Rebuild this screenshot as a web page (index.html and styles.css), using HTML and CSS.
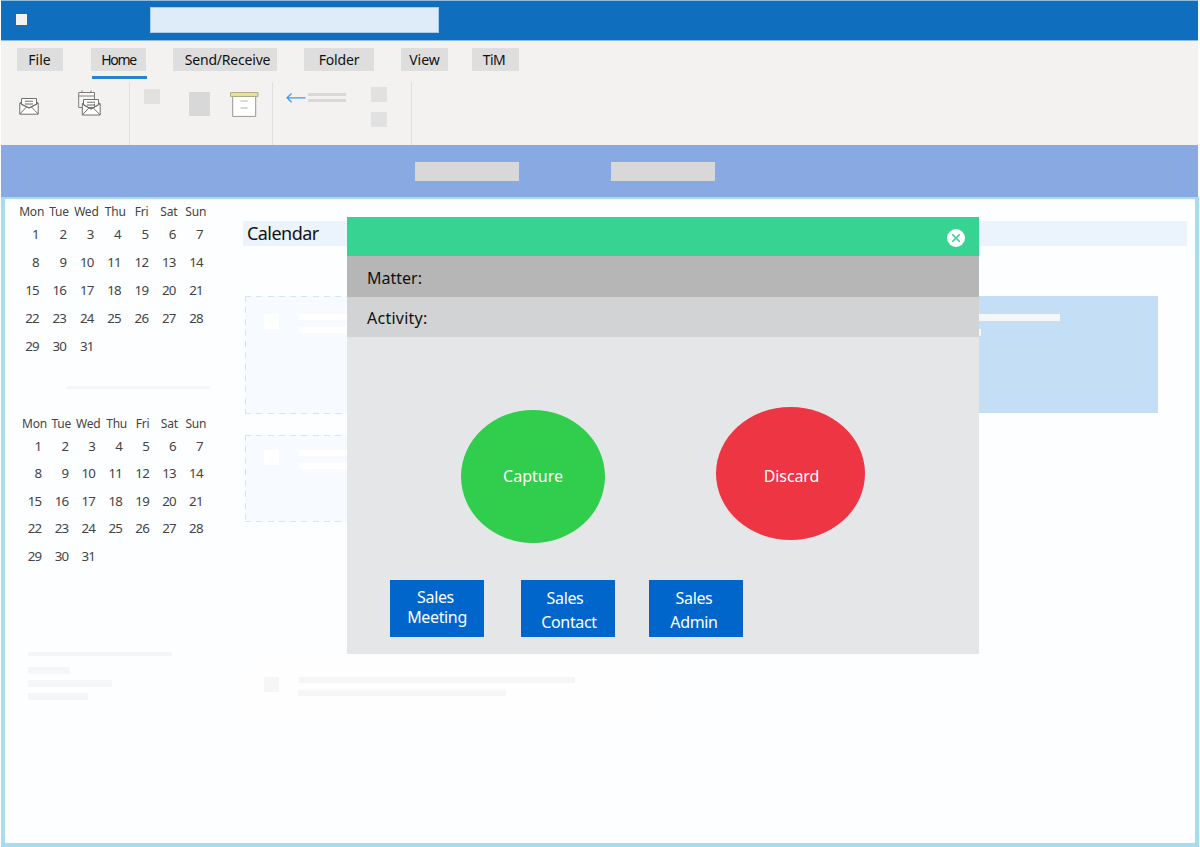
FILE: index.html
```
<!DOCTYPE html>
<html lang="en">
<head>
    <meta charset="UTF-8">
    <meta name="viewport" content="width=device-width, initial-scale=1.0">
    <title>Calendar</title>
    <link rel="stylesheet" href="styles.css">
</head>
<body>
    <div class="app">
        <header class="titlebar">
            <div class="app-icon"></div>
            <div class="search"></div>
        </header>

        <div class="ribbon">
            <nav class="tabs">
                <a class="tab tab-file">File</a>
                <a class="tab tab-home active">Home</a>
                <a class="tab tab-send">Send/Receive</a>
                <a class="tab tab-folder">Folder</a>
                <a class="tab tab-view">View</a>
                <a class="tab tab-tim">TiM</a>
            </nav>
            <div class="tools">
                <div class="group group-new">
                    <svg class="icon-mail" width="20" height="18" viewBox="0 0 20 18" fill="none" stroke="#6f6f6f">
                        <path d="M2.5 6.5V1.5H17.5V6.5" fill="#fff"/>
                        <path d="M.8 6.2L2.5 5V7.5L10 11L17.5 7.5V5L19.2 6.2V17.2H.8Z" fill="#fff"/>
                        <path d="M.8 6.2L10 11L19.2 6.2M.8 17L7.5 10M19.2 17L12.5 10M6 4.2H14M6 7H14"/>
                    </svg>
                    <svg class="icon-mail-cal" width="23" height="26" viewBox="0 0 23 26" fill="none" stroke="#6f6f6f">
                        <path d="M.7 2.5H16.5V17.5H.7ZM.7 6H16.5M4 .5V3M13 .5V3" fill="#f7f7f6" stroke-width=".9"/>
                        <path d="M5.5 13.5V9.5H20.5V13.5" fill="#fff"/>
                        <path d="M4.3 13.7L5.5 13V15L13 19L20.5 15V13L22.2 13.7V25H4.3Z" fill="#fff"/>
                        <path d="M4.3 13.7L13 19L22.2 13.7M4.3 25L10.8 18M22.2 25L15.3 18M9 12.2H17M9 15H17"/>
                    </svg>
                </div>
                <div class="group group-delete">
                    <div class="block block-small"></div>
                    <div class="block block-large"></div>
                    <svg class="icon-archive" width="29" height="26" viewBox="0 0 29 26">
                        <path d="M2.7 4.5H25.7V24.4H2.7Z" fill="#fff" stroke="#969696"/>
                        <path d="M.5 .6H28V4.4H.5Z" fill="#ece88d" stroke="#a9a989"/>
                        <path d="M10.5 9H17.8M10.5 16H17.8" stroke="#b4b4b4"/>
                    </svg>
                </div>
                <div class="group group-respond">
                    <svg class="icon-arrow" width="20" height="10" viewBox="0 0 20 10" fill="none" stroke="#3c97fa" stroke-width="1.2">
                        <path d="M19.5 4.8H1M5.6 .5L1 4.8L5.6 9.2"/>
                    </svg>
                    <div class="lines"></div>
                    <div class="stack">
                        <div class="block block-small"></div>
                        <div class="block block-small"></div>
                    </div>
                </div>
            </div>
        </div>

        <div class="band">
            <div class="band-item"></div>
            <div class="band-item"></div>
        </div>

        <main class="workspace">
            <aside class="sidebar">
                <div class="month">
                    <b>Mon</b><b>Tue</b><b>Wed</b><b>Thu</b><b>Fri</b><b>Sat</b><b>Sun</b>
                    <span>1</span><span>2</span><span>3</span><span>4</span><span>5</span><span>6</span><span>7</span>
                    <span>8</span><span>9</span><span>10</span><span>11</span><span>12</span><span>13</span><span>14</span>
                    <span>15</span><span>16</span><span>17</span><span>18</span><span>19</span><span>20</span><span>21</span>
                    <span>22</span><span>23</span><span>24</span><span>25</span><span>26</span><span>27</span><span>28</span>
                    <span>29</span><span>30</span><span>31</span>
                </div>
                <div class="divider"></div>
                <div class="month month-next">
                    <b>Mon</b><b>Tue</b><b>Wed</b><b>Thu</b><b>Fri</b><b>Sat</b><b>Sun</b>
                    <span>1</span><span>2</span><span>3</span><span>4</span><span>5</span><span>6</span><span>7</span>
                    <span>8</span><span>9</span><span>10</span><span>11</span><span>12</span><span>13</span><span>14</span>
                    <span>15</span><span>16</span><span>17</span><span>18</span><span>19</span><span>20</span><span>21</span>
                    <span>22</span><span>23</span><span>24</span><span>25</span><span>26</span><span>27</span><span>28</span>
                    <span>29</span><span>30</span><span>31</span>
                </div>
                <div class="folders">
                    <div class="rule"></div>
                    <div class="bar bar-short"></div>
                    <div class="bar bar-long"></div>
                    <div class="bar bar-medium"></div>
                </div>
            </aside>

            <section class="content">
                <h1 class="heading">Calendar</h1>
                <div class="row">
                    <div class="card card-dashed">
                        <div class="thumb"></div>
                        <div class="text"><div class="line"></div><div class="line line-half"></div></div>
                    </div>
                    <div class="card card-blue">
                        <div class="thumb"></div>
                        <div class="text"><div class="line"></div><div class="line line-half"></div></div>
                    </div>
                </div>
                <div class="card card-dashed card-low">
                    <div class="thumb"></div>
                    <div class="text"><div class="line"></div><div class="line line-half"></div></div>
                </div>
                <div class="card card-plain">
                    <div class="thumb"></div>
                    <div class="text"><div class="line"></div><div class="line line-half"></div></div>
                </div>
            </section>
        </main>

        <div class="modal">
            <div class="modal-header">
                <svg class="close" width="18" height="18" viewBox="0 0 18 18">
                    <circle cx="9" cy="9" r="9" fill="#fff"/>
                    <path d="M5.2 5.2L12.8 12.8M12.8 5.2L5.2 12.8" stroke="#37d392" stroke-width="1.6"/>
                </svg>
            </div>
            <div class="field field-matter">Matter:</div>
            <div class="field field-activity">Activity:</div>
            <div class="choices">
                <button class="round capture">Capture</button>
                <button class="round discard">Discard</button>
            </div>
            <div class="actions">
                <button class="action meeting"><span class="kind">Sales</span><span>Meeting</span></button>
                <button class="action contact"><span class="kind">Sales</span><span>Contact</span></button>
                <button class="action admin"><span>Sales</span><span>Admin</span></button>
            </div>
        </div>
    </div>
</body>
</html>
```
FILE: styles.css
```
* {
    box-sizing: border-box;
}
body {
    margin: 0;
    background: #fdfeff;
    font-family: 'Noto Sans', 'Open Sans', sans-serif;
    color: #111;
}
.app {
    position: relative;
    width: 1200px;
    height: 847px;
    overflow: hidden;
    display: flex;
    flex-direction: column;
}
.titlebar, .ribbon, .band {
    margin: 0 2px 0 1px;
}

/* title bar */
.titlebar {
    height: 41px;
    background: #106ebe;
    border-top: 1px solid #8fbce0;
    border-bottom: 1px solid #8dbae0;
    display: flex;
    align-items: flex-start;
}
.app-icon {
    width: 11px;
    height: 11px;
    margin: 13px 0 0 15px;
    background: #f3f2f1;
}
.search {
    width: 289px;
    height: 26px;
    margin: 6px 0 0 123px;
    background: #deecf9;
    border: 1px solid #a9cdec;
}

/* ribbon */
.ribbon {
    height: 104px;
    background: #f3f2f1;
    display: flex;
    flex-direction: column;
}
.tabs {
    display: flex;
    height: 41px;
    padding: 7px 0 0 16px;
}
.tab {
    height: 23px;
    line-height: 23px;
    background: #dedede;
    font-size: 14px;
    text-align: center;
}
.tab-file { width: 46px; padding-right: 1px; }
.tab-home { width: 55px; margin-left: 28px; letter-spacing: -1.3px; }
.tab-send { width: 104px; margin-left: 27px; padding-left: 5px; letter-spacing: -0.2px; }
.tab-folder { width: 70px; margin-left: 27px; letter-spacing: -0.2px; }
.tab-view { width: 47px; margin-left: 27px; }
.tab-tim { width: 47px; margin-left: 24px; padding-right: 3px; letter-spacing: -0.6px; }
.tab.active::after {
    content: "";
    display: block;
    width: 55px;
    height: 3px;
    margin: 5px 0 0 1px;
    background: #2484d0;
}
.tools {
    display: flex;
    height: 63px;
}
.group {
    display: flex;
    align-items: flex-start;
    border-right: 1px solid #dfdfde;
}
.group-new { width: 129px; }
.group-delete { width: 143px; }
.group-respond { width: 139px; }
.icon-mail { margin: 15px 0 0 18px; }
.icon-mail-cal { margin: 8px 0 0 39px; }
.block {
    background: #e1e1e1;
}
.block-small { width: 16px; height: 15px; }
.block-large { width: 21px; height: 24px; margin: 10px 0 0 29px; background: #d8d8d8; }
.group-delete .block-small { margin: 7px 0 0 14px; }
.icon-archive { margin: 10px 0 0 20px; }
.icon-arrow { margin: 11px 0 0 13px; }
.lines {
    width: 38px;
    height: 9px;
    margin: 11px 0 0 2px;
    border-top: 3px solid #d8d8d8;
    border-bottom: 3px solid #d8d8d8;
}
.stack {
    display: flex;
    flex-direction: column;
    gap: 10px;
    margin: 5px 0 0 25px;
}

.band {
    height: 52px;
    padding: 17px 0 0 414px;
    background: #88a9e2;
    display: flex;
    gap: 92px;
}
.band-item {
    width: 104px;
    height: 19px;
    background: #d8d8d8;
}

/* workspace */
.workspace {
    height: 650px;
    margin: 0 1px;
    border: 4px solid #a6dcef;
    border-top-width: 2px;
    background: #fdfeff;
    display: flex;
}
.sidebar {
    width: 238px;
    padding-top: 3px;
}
.month {
    display: grid;
    grid-template-columns: repeat(7, 27.35px);
    grid-template-rows: 18px 27.5px;
    grid-auto-rows: 28.1px;
    align-items: center;
    height: 160px;
    margin-left: 13px;
    color: #444;
}
.month b {
    font-size: 12px;
    font-weight: normal;
    text-align: center;
    letter-spacing: -0.2px;
}
.month b:nth-child(4) {
    padding-left: 3px;
}
.month b:nth-child(5), .month b:nth-child(6) {
    padding-left: 1px;
}
.month span {
    text-align: right;
    padding-right: 6.5px;
    font-size: 13.3px;
    letter-spacing: -0.8px;
}
.month-next {
    grid-template-columns: repeat(7, 26.9px);
    grid-template-rows: 17px 27.5px;
    grid-auto-rows: 27.6px;
    margin: 26px 0 0 16px;
}
.divider {
    width: 144px;
    height: 3px;
    margin: 24px 0 0 61px;
    background: #f5f6f8;
}
.folders {
    margin: 77px 0 0 23px;
}
.rule, .bar {
    background: #f5f6f8;
}
.rule { width: 144px; height: 4px; margin-bottom: 11px; }
.bar { height: 7px; margin-bottom: 6px; }
.bar-short { width: 42px; }
.bar-long { width: 84px; }
.bar-medium { width: 60px; }

.content {
    padding: 22px 0 0;
    width: 944px;
}
.heading {
    margin: 0;
    height: 25px;
    padding-left: 4px;
    background: #ebf4fc;
    font-size: 18px;
    font-weight: normal;
    line-height: 24px;
    letter-spacing: -0.55px;
}
.row {
    display: flex;
    gap: 83px;
    margin: 50px 0 0 2px;
}
.card {
    width: 415px;
    display: flex;
    gap: 19px;
    padding: 18px;
}
.card-dashed {
    height: 118px;
    background: #f7fbff;
    background-image:
        repeating-linear-gradient(90deg, #d4e6f6 0 6px, transparent 6px 11.3px),
        repeating-linear-gradient(90deg, #d4e6f6 0 6px, transparent 6px 11.3px),
        repeating-linear-gradient(180deg, #d4e6f6 0 6px, transparent 6px 11.3px);
    background-size: 100% 1px, 100% 1px, 1px 100%;
    background-position: top, bottom, left;
    background-repeat: no-repeat;
}
.card-low {
    height: 87px;
    margin: 21px 0 0 2px;
    padding-top: 15px;
}
.card-blue {
    height: 117px;
    background: #c4def5;
}
.card-plain {
    height: 66px;
    margin: 136px 0 0 2px;
    background: #fefefe;
}
.thumb {
    width: 15px;
    height: 15px;
    background: #fff;
    margin-left: 1px;
}
.line {
    width: 277px;
    height: 6px;
    margin-bottom: 7px;
    background: #fff;
}
.line-half { width: 208px; }
.card-blue .thumb, .card-blue .line,
.card-plain .thumb, .card-plain .line {
    background: #f5f6f8;
}
.card-plain {
    padding-top: 19px;
}
.card-blue .line { width: 264px; height: 7px; margin-bottom: 8px; }
.card-blue .line-half { width: 185px; }

/* capture dialog */
.modal {
    position: absolute;
    left: 347px;
    top: 217px;
    width: 632px;
    height: 437px;
    background: #e5e6e8;
    display: flex;
    flex-direction: column;
}
.modal-header {
    height: 39px;
    padding: 12px 14px 0 0;
    background: #37d392;
    display: flex;
    justify-content: flex-end;
}
.field {
    padding-left: 20px;
    font-size: 16px;
}
.field-matter {
    height: 41px;
    line-height: 45px;
    background: #b6b6b6;
}
.field-activity {
    height: 40px;
    line-height: 42px;
    background: #d2d3d4;
    letter-spacing: 0.25px;
}
button {
    border: none;
    padding: 0;
    color: white;
    font-family: inherit;
    font-size: 16px;
}
.choices {
    display: flex;
    align-items: flex-start;
    gap: 111px;
    height: 243px;
    padding: 70px 0 0 114px;
}
.round {
    border-radius: 50%;
    height: 133px;
}
.capture {
    width: 144px;
    margin-top: 3px;
    padding-bottom: 2px;
    background: #31cd4d;
}
.discard {
    width: 149px;
    padding: 4px 0 0 2px;
    background: #ee3543;
    letter-spacing: -0.1px;
}
.actions {
    display: flex;
    padding-left: 43px;
}
.action {
    width: 94px;
    height: 57px;
    background: #0066cc;
    display: flex;
    flex-direction: column;
    align-items: center;
    justify-content: flex-start;
    padding-top: 7px;
    line-height: 20px;
    letter-spacing: -0.35px;
}
.kind { padding-right: 3px; }
.contact, .admin { line-height: 24px; padding-top: 6px; }
.contact { margin-left: 37px; padding-left: 2px; }
.contact .kind { padding-right: 8px; }
.admin { margin-left: 34px; padding-right: 4px; }
```
